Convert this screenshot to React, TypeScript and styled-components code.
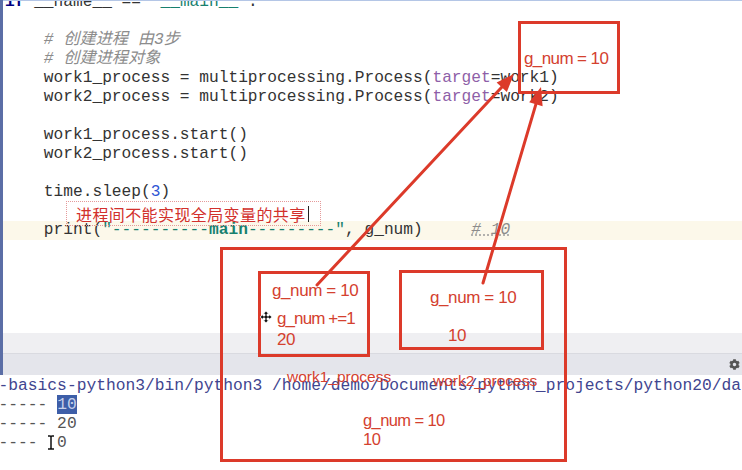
import React from "react";
import styled, { createGlobalStyle } from "styled-components";
import { FaCog } from "react-icons/fa";

const GlobalStyle = createGlobalStyle`
  html, body { margin: 0; padding: 0; background: #fff; }
  body { font-family: "Liberation Sans", Arial, sans-serif; }
`;

const RED = "#dc3a2a";
const RED_TEXT = "#d4412f";

const Window = styled.div`
  position: relative;
  width: 742px;
  height: 470px;
  overflow: hidden;
  background: #fff;
  display: flex;
  flex-direction: column;
`;

const Upper = styled.div`
  display: flex;
  height: 375px;
  flex: none;
`;

const Rail = styled.div`
  width: 3px;
  flex: none;
  background: #5b6ea6;
`;

const UpperMain = styled.div`
  flex: 1;
  min-width: 0;
  display: flex;
  flex-direction: column;
`;

const Editor = styled.div`
  height: 332px;
  border-top: 1px solid #b4c6e6;
  overflow: hidden;
  background: #fff;
`;

const Code = styled.div`
  margin-top: -8px;
`;

const Line = styled.div<{ $current?: boolean }>`
  height: 19px;
  line-height: 19px;
  padding-left: 2px;
  white-space: pre;
  font-family: "Liberation Mono", "Noto Sans CJK SC", monospace;
  font-size: 16.2px;
  color: #333;
  background: ${(p) => (p.$current ? "#fcf8ea" : "transparent")};
`;

const Kw = styled.span`
  color: #000080;
  font-weight: bold;
`;

const Str = styled.span<{ $bold?: boolean }>`
  color: #17806e;
  font-weight: ${(p) => (p.$bold ? "bold" : "normal")};
`;

const Comment = styled.span<{ $flagged?: boolean }>`
  color: #8c8c8c;
  font-style: italic;
  text-decoration: ${(p) => (p.$flagged ? "underline dotted #a0a0a0" : "none")};
`;

const Param = styled.span`
  color: #8e5fa8;
`;

const Num = styled.span`
  color: #2f55d4;
`;

const ScrollStrip = styled.div`
  height: 20px;
  background: #efeff2;
`;

const ConsoleBar = styled.div`
  height: 22px;
  box-sizing: border-box;
  background: #e4e5eb;
  border-top: 1px solid #d9dae0;
  display: flex;
  align-items: center;
  justify-content: flex-end;
  padding-right: 2px;
  color: #555;
`;

const Console = styled.div`
  flex: 1;
  padding-top: 1px;
  overflow: hidden;
  background: #fff;
`;

const ConsoleLine = styled.div<{ $path?: boolean }>`
  margin-left: -1.5px;
  height: 19px;
  line-height: 19px;
  white-space: pre;
  font-family: "Liberation Mono", monospace;
  font-size: 16.3px;
  color: ${(p) => (p.$path ? "#41458f" : "#555")};
`;

const Selected = styled.span`
  background: #3d5ea8;
  color: #c5d0ea;
`;

const IBeamSlot = styled.span`
  display: inline-block;
  width: 9.7px;
  height: 15px;
  vertical-align: -3px;
`;

/* ---------- annotation layer ---------- */

const Overlay = styled.div`
  position: absolute;
  inset: 0;
  pointer-events: none;
`;

const Frame = styled.div<{ $x: number; $y: number; $w: number; $h: number }>`
  position: absolute;
  left: ${(p) => p.$x}px;
  top: ${(p) => p.$y}px;
  width: ${(p) => p.$w}px;
  height: ${(p) => p.$h}px;
  box-sizing: border-box;
  border: 3px solid ${RED};
`;

const TopFrameBody = styled.div`
  padding: 24px 0 0 3px;
`;

const GText = styled.div<{ $size?: number; $lh?: number; $ls?: number }>`
  font-family: "Liberation Sans", Arial, sans-serif;
  font-size: ${(p) => p.$size ?? 17}px;
  line-height: ${(p) => p.$lh ?? 21}px;
  letter-spacing: ${(p) => p.$ls ?? -0.4}px;
  color: ${RED_TEXT};
  white-space: nowrap;
`;

const BigRow = styled.div`
  display: flex;
  align-items: flex-start;
  padding: 20px 0 0 35px;
`;

const ProcCol = styled.div<{ $w: number; $offsetTop?: number; $offsetLeft?: number }>`
  display: flex;
  flex-direction: column;
  flex: none;
  width: ${(p) => p.$w}px;
  margin-top: ${(p) => p.$offsetTop ?? 0}px;
  margin-left: ${(p) => p.$offsetLeft ?? 0}px;
`;

const ProcBox = styled.div<{ $h: number; $pt: number; $pl: number }>`
  position: relative;
  height: ${(p) => p.$h}px;
  box-sizing: border-box;
  border: 3px solid ${RED};
  padding: ${(p) => p.$pt}px 0 0 ${(p) => p.$pl}px;
`;

const Indented = styled.div<{ $top: number; $left: number }>`
  margin-top: ${(p) => p.$top}px;
  margin-left: ${(p) => p.$left}px;
`;

const ProcLabel = styled.div<{ $top: number; $left: number }>`
  margin-top: ${(p) => p.$top}px;
  margin-left: ${(p) => p.$left}px;
  font-family: "Liberation Sans", Arial, sans-serif;
  font-size: 15.5px;
  line-height: 19px;
  color: ${RED_TEXT};
  white-space: nowrap;
`;

const ResultBlock = styled.div`
  margin-top: 21px;
  padding-left: 140px;
`;

const MoveCursor = styled.svg`
  position: absolute;
  left: -1px;
  top: 37px;
`;

const Note = styled.div`
  position: absolute;
  left: 66px;
  top: 201px;
  width: 255px;
  height: 25px;
  box-sizing: border-box;
  border: 1px dotted #e59a9a;
  display: flex;
  align-items: center;
  padding-left: 9px;
  font-family: "Noto Sans CJK SC", sans-serif;
  font-size: 16px;
  line-height: 18px;
  letter-spacing: 0.4px;
  color: #d2302c;
`;

const Caret = styled.span`
  display: inline-block;
  width: 1px;
  height: 16px;
  margin-left: 2px;
  background: #222;
`;

const ArrowLayer = styled.svg`
  position: absolute;
  left: 0;
  top: 0;
`;

type Arrow = { x1: number; y1: number; x2: number; y2: number };

const ARROWS: Arrow[] = [
  { x1: 317, y1: 285, x2: 514, y2: 74 },
  { x1: 483, y1: 283, x2: 541, y2: 87 },
];

function ArrowShape({ a }: { a: Arrow }) {
  const dx = a.x2 - a.x1;
  const dy = a.y2 - a.y1;
  const L = Math.hypot(dx, dy);
  const ux = dx / L;
  const uy = dy / L;
  const hl = 18;
  const hw = 7;
  const bx = a.x2 - ux * hl;
  const by = a.y2 - uy * hl;
  const pts = [
    [a.x2, a.y2],
    [bx - uy * hw, by + ux * hw],
    [bx + uy * hw, by - ux * hw],
  ]
    .map((p) => p.join(","))
    .join(" ");
  return (
    <g>
      <line x1={a.x1} y1={a.y1} x2={bx + ux * 2} y2={by + uy * 2} stroke={RED} strokeWidth={3} strokeLinecap="round" />
      <polygon points={pts} fill={RED} />
    </g>
  );
}

function IBeam() {
  const d = "M1 1 H3 Q4 1 4 2.5 Q4 1 5 1 H7 M4 2.5 V12.5 M1 14 H3 Q4 14 4 12.5 Q4 14 5 14 H7";
  return (
    <svg width="8" height="15" viewBox="0 0 8 15">
      <path d={d} stroke="#fff" strokeWidth="3" fill="none" />
      <path d={d} stroke="#111" strokeWidth="1.5" fill="none" />
    </svg>
  );
}

export default function App() {
  return (
    <>
      <GlobalStyle />
      <Window>
        <Upper>
          <Rail />
          <UpperMain>
            <Editor>
              <Code>
                <Line>
                  <Kw>if</Kw> __name__ == <Str>"__main__"</Str>:
                </Line>
                <Line />
                <Line>
                  {"    "}
                  <Comment># 创建进程 由3步</Comment>
                </Line>
                <Line>
                  {"    "}
                  <Comment># 创建进程对象</Comment>
                </Line>
                <Line>
                  {"    work1_process = multiprocessing.Process("}
                  <Param>target</Param>
                  {"=work1)"}
                </Line>
                <Line>
                  {"    work2_process = multiprocessing.Process("}
                  <Param>target</Param>
                  {"=work2)"}
                </Line>
                <Line />
                <Line>{"    work1_process.start()"}</Line>
                <Line>{"    work2_process.start()"}</Line>
                <Line />
                <Line>
                  {"    time.sleep("}
                  <Num>3</Num>
                  {")"}
                </Line>
                <Line />
                <Line $current>
                  {"    print("}
                  <Str>{'"----------'}</Str>
                  <Str $bold>main</Str>
                  <Str>{'---------"'}</Str>
                  {", g_num)     "}
                  <Comment $flagged># 10</Comment>
                </Line>
              </Code>
            </Editor>
            <ScrollStrip />
            <ConsoleBar>
              <FaCog size={11} />
            </ConsoleBar>
          </UpperMain>
        </Upper>
        <Console>
          <ConsoleLine $path>-basics-python3/bin/python3 /home/demo/Documents/python_projects/python20/da</ConsoleLine>
          <ConsoleLine>
            {"----- "}
            <Selected>10</Selected>
          </ConsoleLine>
          <ConsoleLine>----- 20</ConsoleLine>
          <ConsoleLine>
            {"---- "}
            <IBeamSlot>
              <IBeam />
            </IBeamSlot>
            0
          </ConsoleLine>
        </Console>

        <Overlay>
          <Note>
            进程间不能实现全局变量的共享
            <Caret />
          </Note>

          <Frame $x={518} $y={21} $w={102} $h={73}>
            <TopFrameBody>
              <GText $ls={-0.6}>g_num = 10</GText>
            </TopFrameBody>
          </Frame>

          <Frame $x={220} $y={247} $w={347} $h={215}>
            <BigRow>
              <ProcCol $w={112} $offsetTop={1}>
                <ProcBox $h={86} $pt={6} $pl={11}>
                  <GText>g_num = 10</GText>
                  <Indented $top={7} $left={5}>
                    <GText $ls={-0.9}>g_num +=1</GText>
                    <GText>20</GText>
                  </Indented>
                  <MoveCursor width="12" height="12" viewBox="0 0 12 12">
                    <path
                      d="M6 0 L8.6 3 H7 V5 H9 V3.4 L12 6 L9 8.6 V7 H7 V9 H8.6 L6 12 L3.4 9 H5 V7 H3 V8.6 L0 6 L3 3.4 V5 H5 V3 H3.4 Z"
                      fill="#111"
                      stroke="#fff"
                      strokeWidth="0.7"
                    />
                  </MoveCursor>
                </ProcBox>
                <ProcLabel $top={10} $left={29}>work1_process</ProcLabel>
              </ProcCol>
              <ProcCol $w={145} $offsetLeft={29}>
                <ProcBox $h={80} $pt={14} $pl={28}>
                  <GText>g_num = 10</GText>
                  <Indented $top={17} $left={18}>
                    <GText>10</GText>
                  </Indented>
                </ProcBox>
                <ProcLabel $top={21} $left={34}>work2_process</ProcLabel>
              </ProcCol>
            </BigRow>
            <ResultBlock>
              <GText $size={16.5} $lh={19} $ls={-0.6}>g_num = 10</GText>
              <GText $size={16.5} $lh={19}>10</GText>
            </ResultBlock>
          </Frame>

          <ArrowLayer width="742" height="470" viewBox="0 0 742 470">
            {ARROWS.map((a, i) => (
              <ArrowShape key={i} a={a} />
            ))}
          </ArrowLayer>
        </Overlay>
      </Window>
    </>
  );
}
